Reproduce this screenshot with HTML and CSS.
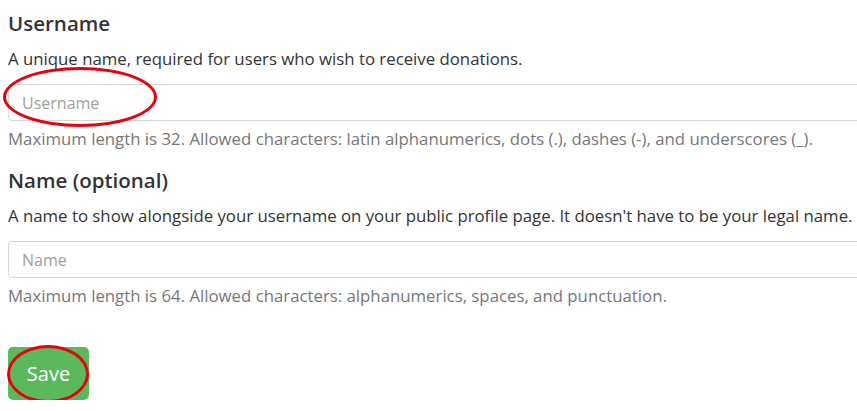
FILE: index.html
```html
<!DOCTYPE html>
<html>
<head>
<meta charset="utf-8">
<link rel="stylesheet" href="styles.css">
</head>
<body>
<form class="form">
  <div class="field">
    <label class="label" for="username">Username</label>
    <p class="desc">A unique name, required for users who wish to receive donations.</p>
    <div class="input-wrap">
      <input class="input" id="username" type="text" placeholder="Username">
      <span class="mark mark-input"></span>
    </div>
    <p class="help">Maximum length is 32. Allowed characters: latin alphanumerics, dots (.), dashes (-), and underscores (_).</p>
  </div>
  <div class="field">
    <label class="label" for="name">Name (optional)</label>
    <p class="desc">A name to show alongside your username on your public profile page. It doesn't have to be your legal name.</p>
    <div class="input-wrap">
      <input class="input" id="name" type="text" placeholder="Name">
    </div>
    <p class="help">Maximum length is 64. Allowed characters: alphanumerics, spaces, and punctuation.</p>
  </div>
  <div class="actions">
    <button class="btn" type="submit">Save</button>
    <span class="mark mark-btn"></span>
  </div>
</form>
</body>
</html>
```
FILE: styles.css
```css
html, body {
  margin: 0;
  padding: 0;
  background: #fff;
  overflow: hidden;
}
body {
  font-family: "Open Sans", "Noto Sans", sans-serif;
  color: #333;
  font-size: 16.8px;
}
.form {
  width: 900px;
  padding: 10px 0 0 8px;
}
.field {
  display: flex;
  flex-direction: column;
}
.field + .field {
  margin-top: 17px;
}
.label {
  font-size: 20.5px;
  font-weight: 600;
  line-height: 26px;
  color: #333;
}
.desc {
  margin: 12px 0 0;
  line-height: 22px;
  color: #333;
}
.input-wrap {
  position: relative;
  margin-top: 14px;
}
.input {
  display: block;
  box-sizing: border-box;
  width: 100%;
  height: 37px;
  padding: 0 13px;
  border: 1px solid #d6d6d6;
  border-radius: 4px;
  font-family: inherit;
  font-size: 16px;
  color: #333;
  background: #fff;
  outline: none;
}
.input::placeholder {
  color: #a0a0a0;
}
.help {
  margin: 7px 0 0;
  line-height: 22px;
  color: #777;
}
.actions {
  position: relative;
  margin-top: 40px;
  display: flex;
}
.btn {
  width: 81px;
  height: 53px;
  border: none;
  border-radius: 5px;
  background: #5cb85c;
  color: #fff;
  font-family: inherit;
  font-size: 20px;
  cursor: pointer;
}
.mark {
  position: absolute;
  border: 3.5px solid #e8000b;
  border-radius: 50%;
  box-sizing: border-box;
  pointer-events: none;
}
.mark-input {
  left: -5px;
  top: -17px;
  width: 154px;
  height: 60px;
}
.mark-btn {
  left: -1px;
  top: -2px;
  width: 82px;
  height: 58px;
}
```
